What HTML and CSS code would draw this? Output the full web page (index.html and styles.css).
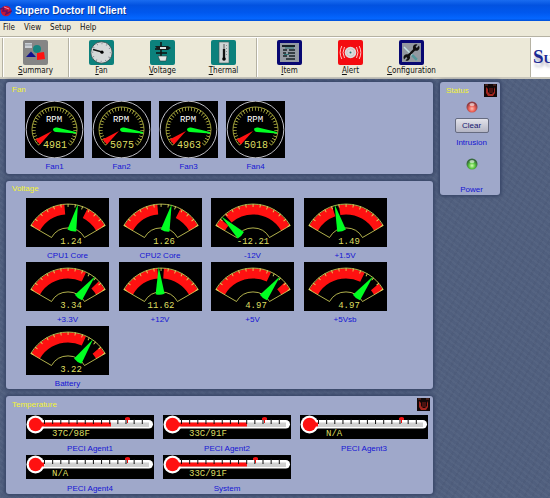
FILE: index.html
```html
<!DOCTYPE html>
<html lang="en">
<head>
<meta charset="utf-8">
<title>Supero Doctor III Client</title>
<link rel="stylesheet" href="styles.css">
</head>
<body>
<svg class="defs" aria-hidden="true">
  <defs>
    <symbol id="fan-face" viewBox="0 0 59 57">
      <rect width="59" height="57" fill="#000"/>
      <circle cx="29.500" cy="28.500" r="28.300" fill="none" stroke="#d4d4da" stroke-width=".9"/>
      <path d="M13.600 44.400A22.500 22.500 0 1 1 45.400 44.400" fill="none" stroke="#d8d850" stroke-width=".7"/>
      <path d="M15 43A20.500 20.500 0 1 1 44 43" fill="none" stroke="#d8d850" stroke-width="3.500" pathLength="270" stroke-dasharray="1.800 6.585"/>
      <path d="M27 30L15 43.500L10.500 38.500Z" fill="#f11"/>
      <path d="M28 28Q29 26 32 26.500L51 31V32.500L31 31Q28 30.500 28 28Z" fill="#0f2"/>
    </symbol>
    <symbol id="volt-scale" viewBox="0 0 83 49">
      <path d="M4.800 27.500A43 43 0 0 1 79.200 27.500L58.500 39.500A19 19 0 0 0 25.500 39.500Z" fill="none" stroke="#dede60" stroke-width=".8"/>
      <path d="M6 28.250A41.500 41.500 0 0 1 78 28.250" fill="none" stroke="#dede60" stroke-width="3" pathLength="120" stroke-dasharray="1.200 8.700" stroke-dashoffset="-10"/>
    </symbol>
    <symbol id="needle" viewBox="0 0 83 49" overflow="visible">
      <path d="M42 5L46.500 32Q42 33.500 37.500 32Z" fill="#0f2"/>
    </symbol>
    <symbol id="thermo" viewBox="0 0 128 24">
      <rect width="128" height="24" fill="#000"/>
      <rect x="9" y="5" width="118" height="8.500" rx="4.200" fill="#fff"/>
      <rect x="16" y="7.500" width="107" height="4.500" fill="#d0d0d0"/>
      <circle cx="9.500" cy="9.500" r="9" fill="#fff"/>
      <circle cx="9.500" cy="9.500" r="6.700" fill="#f11"/>
    </symbol>
    <symbol id="thermo-ticks" viewBox="0 0 128 24">
      <path d="M18 6.500H118" stroke="#111" stroke-width="5" stroke-dasharray="1 7.150"/>
    </symbol>
    <symbol id="flag" viewBox="0 0 6 7"><path d="M0 1Q3 -1 5 1V3H3V6H2V3H0Z" fill="#e11"/></symbol>
    <symbol id="chip" viewBox="0 0 13 13">
      <rect width="13" height="13" fill="#120808"/>
      <path d="M2 3L4 5V8L6 10H8L10 8V5L11 3V9L9 12H4L2 9Z" fill="#a4261e"/>
      <path d="M5 4H9V9H5Z" fill="#4b1210"/>
      <path d="M1 1H4M9 1H12" stroke="#73362c"/>
    </symbol>
    <radialGradient id="red-light" cx=".5" cy=".65"><stop offset="0" stop-color="#ffc0b4"/><stop offset=".55" stop-color="#ed6156"/><stop offset="1" stop-color="#913c43"/></radialGradient>
    <radialGradient id="green-light" cx=".5" cy=".65"><stop offset="0" stop-color="#d4ffb4"/><stop offset=".55" stop-color="#59c73f"/><stop offset="1" stop-color="#376b3d"/></radialGradient>
  </defs>
</svg>

<header class="titlebar">
  <svg class="app-icon" viewBox="0 0 12 12"><circle cx="6" cy="6" r="5.300" fill="#c51636"/><path d="M0 4L4 3L3 6H7L6 9L12 6" fill="none" stroke="#611065" stroke-width="1.500"/><path d="M4 2L9 4" stroke="#f9889b"/></svg>
  <h1>Supero Doctor III Client</h1>
</header>

<nav class="menubar">
  <a href="#file">File</a><a href="#view">View</a><a href="#setup">Setup</a><a href="#help">Help</a>
</nav>

<div class="toolbar">
  <div class="group">
    <button class="tool" type="button">
      <svg class="icon" viewBox="0 0 25 25"><rect width="25" height="25" rx="2" fill="#858585"/><path d="M2 3H9V8H2Z" fill="#c9ced4"/><path d="M2 5H9" stroke="#9298a0"/><circle cx="14" cy="9" r="4" fill="#16847f"/><path d="M3 17L8 11.500L13 17Z" fill="#11118c"/><path d="M14 13L21 12L22 19L14 20Z" fill="#f11"/></svg>
      <span><u>S</u>ummary</span>
    </button>
  </div>
  <div class="group">
    <button class="tool" type="button">
      <svg class="icon" viewBox="0 0 25 25"><rect width="25" height="25" rx="2" fill="#0c817c"/><circle cx="12.500" cy="12.500" r="10.700" fill="#d5d8d8" stroke="#263c3b" stroke-width=".7"/><circle cx="12.500" cy="12.500" r="9" fill="none" stroke="#778" stroke-width="1.500" stroke-dasharray=".7 4"/><path d="M4 9.500L13 12" stroke="#111" stroke-width="1.300"/><circle cx="13" cy="12.200" r="1.600"/></svg>
      <span><u>F</u>an</span>
    </button>
    <button class="tool" type="button">
      <svg class="icon" viewBox="0 0 25 25"><rect width="25" height="25" rx="2" fill="#0c817c"/><path d="M11 2V16M6 13H17M5 9H12" stroke="#111" stroke-width="1.500"/><path d="M5 6H18L21 8L18 10H8Z" fill="#151d1d"/><path d="M10 7H16V9H10Z" fill="#dde2e2"/><path d="M8 16H17L16 21H10Z" fill="#e3e7e7" stroke="#273d3a" stroke-width=".6"/></svg>
      <span><u>V</u>oltage</span>
    </button>
    <button class="tool" type="button">
      <svg class="icon" viewBox="0 0 25 25"><rect width="25" height="25" rx="2" fill="#0c817c"/><path d="M8 2H18V23H8Z" fill="#cfd5d5" stroke="#405a58" stroke-width=".6"/><path d="M13 4V18" stroke="#555" stroke-width="1"/><path d="M13 9V19" stroke="#111" stroke-width="2.300"/><circle cx="13" cy="19" r="1.800"/><path d="M15.500 5V16" stroke="#869090" stroke-dasharray="1 2"/></svg>
      <span><u>T</u>hermal</span>
    </button>
  </div>
  <div class="group">
    <button class="tool" type="button">
      <svg class="icon" viewBox="0 0 25 25"><rect width="25" height="25" rx="2" fill="#080872"/><path d="M3 3H22V22H3Z" fill="#949aa3"/><path d="M5 6H18" stroke="#172226" stroke-width="2"/><path d="M6 10H10M12 10H18M6 13H9M11 13H18M6 16H10M12 16H18M9 19H18" stroke="#172226" stroke-width="1.500"/><path d="M8 8H17M7 14.500H12" stroke="#2d7779"/></svg>
      <span><u>I</u>tem</span>
    </button>
    <button class="tool" type="button">
      <svg class="icon" viewBox="0 0 25 25"><rect width="25" height="25" rx="2" fill="#f40b10"/><circle cx="12.500" cy="12.500" r="5.800" fill="#dedada"/><circle cx="12.500" cy="12.500" r="3.800" fill="none" stroke="#b8b8bb" stroke-width=".6"/><circle cx="12.500" cy="12.500" r="1" fill="#237a78"/><path d="M6.500 7Q3.500 12.500 6.500 18M3.800 6Q.5 12.500 3.800 19M18.500 7Q21.500 12.500 18.500 18M21.200 6Q24.500 12.500 21.200 19" fill="none" stroke="#ffc4c4" stroke-width="1"/></svg>
      <span><u>A</u>lert</span>
    </button>
    <button class="tool" type="button">
      <svg class="icon" viewBox="0 0 25 25"><rect width="25" height="25" rx="2" fill="#080872"/><path d="M3 3H22V22H3Z" fill="#9399a0"/><path d="M5 7L18 20" stroke="#c2e2e2" stroke-width="1.500"/><path d="M13 15L18 20" stroke="#55989b" stroke-width="2.500"/><path d="M8 17L17 8" stroke="#111" stroke-width="2.400"/><path d="M20 5.500L17.800 8L16.500 6.800L18.500 4.500A3.300 3.300 0 1 0 20.500 7.500Z M5 19.500L7.200 17L8.500 18.200L6.500 20.500A3.300 3.300 0 1 0 4.500 17.500Z" fill="#111"/></svg>
      <span><u>C</u>onfiguration</span>
    </button>
  </div>
  <div class="brand">Su</div>
</div>

<main class="workspace">
  <div class="readings">
    <section class="panel fans">
      <h2>Fan</h2>
      <div class="fan-row">
        <figure><svg class="fan" viewBox="0 0 59 57"><use href="#fan-face"/><text class="rpm" x="29" y="21">RPM</text><text class="count" x="30" y="47">4981</text></svg><figcaption>Fan1</figcaption></figure>
        <figure><svg class="fan" viewBox="0 0 59 57"><use href="#fan-face"/><text class="rpm" x="29" y="21">RPM</text><text class="count" x="30" y="47">5075</text></svg><figcaption>Fan2</figcaption></figure>
        <figure><svg class="fan" viewBox="0 0 59 57"><use href="#fan-face"/><text class="rpm" x="29" y="21">RPM</text><text class="count" x="30" y="47">4963</text></svg><figcaption>Fan3</figcaption></figure>
        <figure><svg class="fan" viewBox="0 0 59 57"><use href="#fan-face"/><text class="rpm" x="29" y="21">RPM</text><text class="count" x="30" y="47">5018</text></svg><figcaption>Fan4</figcaption></figure>
      </div>
    </section>

    <section class="panel volts">
      <h2>Voltage</h2>
      <div class="volt-grid">
        <figure><svg class="volt" viewBox="0 0 83 49"><path class="zone" pathLength="120" stroke-dasharray="55 32 33 120" d="M9.500 30.250A37.500 37.500 0 0 1 74.500 30.250"/><use href="#volt-scale"/><use href="#needle" transform="rotate(13 42 49)"/><text x="45" y="46">1.24</text></svg><figcaption>CPU1 Core</figcaption></figure>
        <figure><svg class="volt" viewBox="0 0 83 49"><path class="zone" pathLength="120" stroke-dasharray="55 32 33 120" d="M9.500 30.250A37.500 37.500 0 0 1 74.500 30.250"/><use href="#volt-scale"/><use href="#needle" transform="rotate(14 42 49)"/><text x="45" y="46">1.26</text></svg><figcaption>CPU2 Core</figcaption></figure>
        <figure><svg class="volt" viewBox="0 0 83 49"><path class="zone" pathLength="120" stroke-dasharray="11 8 101 120" d="M9.500 30.250A37.500 37.500 0 0 1 74.500 30.250"/><use href="#volt-scale"/><use href="#needle" transform="rotate(-46 42 49)"/><text x="42" y="46">-12.21</text></svg><figcaption>-12V</figcaption></figure>
        <figure><svg class="volt" viewBox="0 0 83 49"><path class="zone" pathLength="120" stroke-dasharray="41 9 70 120" d="M9.500 30.250A37.500 37.500 0 0 1 74.500 30.250"/><use href="#volt-scale"/><use href="#needle" transform="rotate(-15 42 49)"/><text x="45" y="46">1.49</text></svg><figcaption>+1.5V</figcaption></figure>
        <figure><svg class="volt" viewBox="0 0 83 49"><path class="zone" pathLength="120" stroke-dasharray="85 21 14 120" d="M9.500 30.250A37.500 37.500 0 0 1 74.500 30.250"/><use href="#volt-scale"/><use href="#needle" transform="rotate(38 42 49)"/><text x="45" y="46">3.34</text></svg><figcaption>+3.3V</figcaption></figure>
        <figure><svg class="volt" viewBox="0 0 83 49"><path class="zone" pathLength="120" stroke-dasharray="55 9 56 120" d="M9.500 30.250A37.500 37.500 0 0 1 74.500 30.250"/><use href="#volt-scale"/><use href="#needle" transform="rotate(-3 42 49)"/><text x="42" y="46">11.62</text></svg><figcaption>+12V</figcaption></figure>
        <figure><svg class="volt" viewBox="0 0 83 49"><path class="zone" pathLength="120" stroke-dasharray="85 23 12 120" d="M9.500 30.250A37.500 37.500 0 0 1 74.500 30.250"/><use href="#volt-scale"/><use href="#needle" transform="rotate(38 42 49)"/><text x="45" y="46">4.97</text></svg><figcaption>+5V</figcaption></figure>
        <figure><svg class="volt" viewBox="0 0 83 49"><path class="zone" pathLength="120" stroke-dasharray="86 24 10 120" d="M9.500 30.250A37.500 37.500 0 0 1 74.500 30.250"/><use href="#volt-scale"/><use href="#needle" transform="rotate(38 42 49)"/><text x="45" y="46">4.97</text></svg><figcaption>+5Vsb</figcaption></figure>
        <figure><svg class="volt" viewBox="0 0 83 49"><path class="zone" pathLength="120" stroke-dasharray="85 24 11 120" d="M9.500 30.250A37.500 37.500 0 0 1 74.500 30.250"/><use href="#volt-scale"/><use href="#needle" transform="rotate(35 42 49)"/><text x="45" y="46">3.22</text></svg><figcaption>Battery</figcaption></figure>
      </div>
    </section>

    <section class="panel temps">
      <div class="panel-head"><h2>Temperature</h2><svg class="chip"><use href="#chip"/></svg></div>
      <div class="temp-grid">
        <figure><svg class="temp" viewBox="0 0 128 24"><use href="#thermo"/><path class="heat" d="M15 9.500H85"/><use href="#thermo-ticks"/><use href="#flag" x="99" y="2" width="6" height="7"/><text x="26" y="21">37C/98F</text></svg><figcaption>PECI Agent1</figcaption></figure>
        <figure><svg class="temp" viewBox="0 0 128 24"><use href="#thermo"/><path class="heat" d="M15 9.500H84"/><use href="#thermo-ticks"/><use href="#flag" x="99" y="2" width="6" height="7"/><text x="26" y="21">33C/91F</text></svg><figcaption>PECI Agent2</figcaption></figure>
        <figure><svg class="temp" viewBox="0 0 128 24"><use href="#thermo"/><path class="heat" d="M15 9.500H18"/><use href="#thermo-ticks"/><use href="#flag" x="99" y="2" width="6" height="7"/><text x="26" y="21">N/A</text></svg><figcaption>PECI Agent3</figcaption></figure>
        <figure><svg class="temp" viewBox="0 0 128 24"><use href="#thermo"/><path class="heat" d="M15 9.500H18"/><use href="#thermo-ticks"/><use href="#flag" x="99" y="2" width="6" height="7"/><text x="26" y="21">N/A</text></svg><figcaption>PECI Agent4</figcaption></figure>
        <figure><svg class="temp" viewBox="0 0 128 24"><use href="#thermo"/><path class="heat" d="M15 9.500H84"/><use href="#thermo-ticks"/><use href="#flag" x="90" y="2" width="6" height="7"/><text x="26" y="21">33C/91F</text></svg><figcaption>System</figcaption></figure>
      </div>
    </section>
  </div>

  <aside class="panel status">
    <div class="panel-head"><h2>Status</h2><svg class="chip"><use href="#chip"/></svg></div>
    <svg class="light" viewBox="0 0 12 12"><circle cx="6" cy="6" r="5.500" fill="url(#red-light)"/><ellipse cx="6" cy="3.500" rx="2.500" ry="1.500" fill="#fff" opacity=".6"/></svg>
    <button class="clear" type="button">Clear</button>
    <span class="caption">Intrusion</span>
    <svg class="light power" viewBox="0 0 12 12"><circle cx="6" cy="6" r="5.500" fill="url(#green-light)"/><ellipse cx="6" cy="3.500" rx="2.500" ry="1.500" fill="#fff" opacity=".6"/></svg>
    <span class="caption last">Power</span>
  </aside>
</main>
</body>
</html>
```
FILE: styles.css
```css
* { box-sizing: border-box; }

body {
  margin: 0;
  min-height: 100vh;
  display: flex;
  flex-direction: column;
  overflow: hidden;
  background: #50607f;
  font: 8px/10px "Liberation Sans", Arial, sans-serif;
}

.defs { position: absolute; width: 0; height: 0; }

h1, h2, figure { margin: 0; }

.titlebar {
  display: flex;
  align-items: center;
  gap: 3px;
  height: 21px;
  flex: none;
  background: linear-gradient(#1a6cf0, #0252e0 25%, #0058ee 60%, #0466ff 88%, #0050d8);
}
.titlebar h1 {
  font-size: 10px;
  line-height: 21px;
  color: #fff;
  text-shadow: 1px 1px #0a3a9c;
}
.app-icon { width: 12px; height: 12px; }

.menubar {
  display: flex;
  gap: 9px;
  flex: none;
  height: 16px;
  padding: 0 3px;
  background: #ece9d8;
  border-bottom: 1px solid #b5b2a3;
}
.menubar a {
  color: #111;
  text-decoration: none;
  line-height: 14px;
}
.menubar a, .tool { font-family: "DejaVu Sans Condensed", "DejaVu Sans", sans-serif; font-size: 8px; }

.toolbar {
  display: flex;
  flex: none;
  height: 42px;
  padding-left: 2px;
  background: #ece9d8;
  border-top: 1px solid #fff;
  border-bottom: 2px solid #c9c7bc;
}
.group {
  display: flex;
  padding: 0 2px;
  border-left: 1px solid #b5b2a3;
  box-shadow: inset 1px 0 #fff;
}
.tool {
  display: flex;
  flex-direction: column;
  align-items: center;
  gap: 1px;
  width: 61px;
  padding: 2px 0 0;
  border: 0;
  background: none;
  color: #111;
  line-height: 10px;
}
.icon { width: 25px; height: 25px; }
.tool u { text-underline-offset: 1px; }
.brand {
  width: 20px;
  margin-left: auto;
  padding-left: 2px;
  overflow: hidden;
  background: #fff;
  border-left: 1px solid #b5b2a3;
  font: bold small-caps 19px/38px "Liberation Serif", "Times New Roman", serif;
  color: #1b2a94;
  text-shadow: 1px 4px 3px #b5b5c5;
}

.workspace {
  display: flex;
  align-items: flex-start;
  gap: 7px;
  flex: 1;
  padding: 3px 6px 4px;
  background:
    repeating-linear-gradient(37deg, #ffffff08 0 2px, #0000 2px 5px),
    repeating-linear-gradient(118deg, #00001008 0 2px, #0000 2px 7px),
    #505f7e;
}
.readings {
  display: flex;
  flex-direction: column;
  gap: 7px;
  flex: 0 1 427px;
}
.panel {
  padding: 3px 3px 0 6px;
  background: #9fa8ca;
  border-radius: 3px;
  box-shadow: 0 0 3px 2px #3c4a6b;
}
.panel h2 {
  font-size: 8px;
  line-height: 10px;
  font-weight: normal;
  color: #f4f430;
}
.panel-head {
  display: flex;
  justify-content: space-between;
  align-items: center;
}
.chip { width: 13px; height: 13px; }

figcaption, .caption {
  color: #1414d4;
  text-align: center;
  line-height: 10px;
}
figure svg {
  display: block;
  background: #000;
}
svg text {
  font-family: "Liberation Mono", "Courier New", monospace;
  font-size: 9px;
  fill: #dede60;
}

.fan-row {
  display: flex;
  gap: 8px;
  padding: 6px 13px 2px;
}
.fan { width: 59px; height: 57px; }
.fan + figcaption { padding-top: 4px; }
.fan text { text-anchor: middle; }
.fan .rpm { fill: #fff; }
.fan .count { font-size: 10px; }

.volt-grid {
  display: grid;
  grid-template-columns: repeat(4, 1fr);
  row-gap: 1px;
  max-width: 384px;
  padding: 4px 0 0 14px;
}
.volt { width: 83px; height: 49px; }
.volt + figcaption { width: 83px; padding: 4px 0 0; }
.volt text { text-anchor: middle; }
.zone { fill: none; stroke: #f11; stroke-width: 10; }

.temp-grid {
  display: grid;
  grid-template-columns: repeat(3, 128px);
  gap: 1px 9px;
  padding: 4px 0 0 14px;
}
.temp { width: 128px; height: 24px; }
.temp + figcaption { padding: 5px 0 0; }
.heat { stroke: #f11; stroke-width: 4; }

.temps, .status { padding-top: 2px; }

.status {
  display: flex;
  flex-direction: column;
  align-items: center;
  width: 60px;
  flex: none;
}
.status .panel-head { align-self: stretch; }
.light { width: 12px; height: 12px; margin-top: 4px; }
.clear {
  width: 34px;
  height: 15px;
  margin: 5px 0;
  padding: 0;
  border: 1px solid #666b80;
  border-radius: 2px;
  background: linear-gradient(#e2e2ea, #b4b5c4);
  font: inherit;
  color: #15156e;
}
.power { margin-top: 10px; }
.last { margin: 15px 0 0; }
```
